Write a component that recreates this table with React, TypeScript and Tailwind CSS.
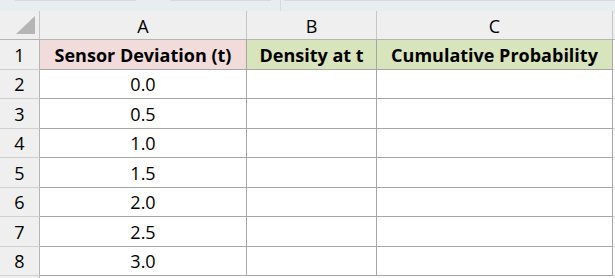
const rows = [
  { n: 2, v: '0.0', h: 'h-[29px]' },
  { n: 3, v: '0.5', h: 'h-[30px]' },
  { n: 4, v: '1.0', h: 'h-[29px]' },
  { n: 5, v: '1.5', h: 'h-[30px]' },
  { n: 6, v: '2.0', h: 'h-[29px]' },
  { n: 7, v: '2.5', h: 'h-[30px]' },
  { n: 8, v: '3.0', h: 'h-[29px]' },
];

function RowHead({ n, h }: { n: number; h: string }) {
  return (
    <div className={`${h} w-[40px] shrink-0 bg-[#efefef] border-r border-b border-r-[#b4b4b4] border-b-[#d0d0d0] flex items-center justify-center`}>
      {n}
    </div>
  );
}

export default function App() {
  return (
    <div
      className="w-[615px] h-[278px] overflow-hidden bg-white text-black text-[18px] leading-none"
      style={{ fontFamily: '"Open Sans", Lato, sans-serif' }}
    >
      {/* formula bar remnant */}
      <div className="h-[11px] bg-[#e8edef] flex">
        <div className="w-[15px]" />
        <div className="w-[121px] border-t border-[#d6dadc]" />
        <div className="w-[34px]" />
        <div className="w-[101px] border-t border-[#d6dadc]" />
        <div className="w-[10px] border-r border-[#d6dadc]" />
        <div className="w-[3px]" />
        <div className="flex-1 border-t border-[#d6dadc]" />
      </div>

      {/* column headers */}
      <div className="flex h-[29px] bg-[#efefef] border-b border-[#b4b4b4]">
        <div className="w-[40px] shrink-0 border-r border-[#c6c6c6] flex items-end justify-end pr-[4px] pb-[5px]">
          <div className="w-0 h-0 border-l-[19px] border-l-transparent border-b-[18px] border-b-[#b5b5b5]" />
        </div>
        <div className="w-[207px] shrink-0 border-r border-[#c6c6c6] flex items-center justify-center pt-[2px]">A</div>
        <div className="w-[130px] shrink-0 border-r border-[#c6c6c6] flex items-center justify-center pt-[2px]">B</div>
        <div className="w-[236px] shrink-0 border-r border-[#c6c6c6] flex items-center justify-center pt-[2px]">C</div>
        <div className="flex-1" />
      </div>

      {/* row 1: titles */}
      <div className="flex h-[30px]">
        <RowHead n={1} h="h-[30px]" />
        <div className="w-[207px] shrink-0 bg-[#f2dcdb] border-r border-b border-[#a6a6a6] flex items-center justify-center font-bold">
          Sensor Deviation (t)
        </div>
        <div className="w-[130px] shrink-0 bg-[#d8e4bc] border-r border-b border-[#a6a6a6] flex items-center justify-center font-bold">
          Density at t
        </div>
        <div className="w-[236px] shrink-0 bg-[#d8e4bc] border-r border-b border-[#a6a6a6] flex items-center justify-center font-bold">
          Cumulative Probability
        </div>
        <div className="flex-1 border-b border-[#d4d4d4]" />
      </div>

      {rows.map((r) => (
        <div key={r.n} className={`flex ${r.h}`}>
          <RowHead n={r.n} h={r.h} />
          <div className="w-[207px] shrink-0 border-r border-b border-[#a6a6a6] flex items-center justify-center">
            {r.v}
          </div>
          <div className="w-[130px] shrink-0 border-r border-b border-[#a6a6a6]" />
          <div className="w-[236px] shrink-0 border-r border-b border-[#a6a6a6]" />
          <div className="flex-1 border-b border-[#d4d4d4]" />
        </div>
      ))}

      <div className="flex h-[2px]">
        <div className="w-[40px] bg-[#efefef] border-r border-[#b4b4b4]" />
      </div>
    </div>
  );
}
